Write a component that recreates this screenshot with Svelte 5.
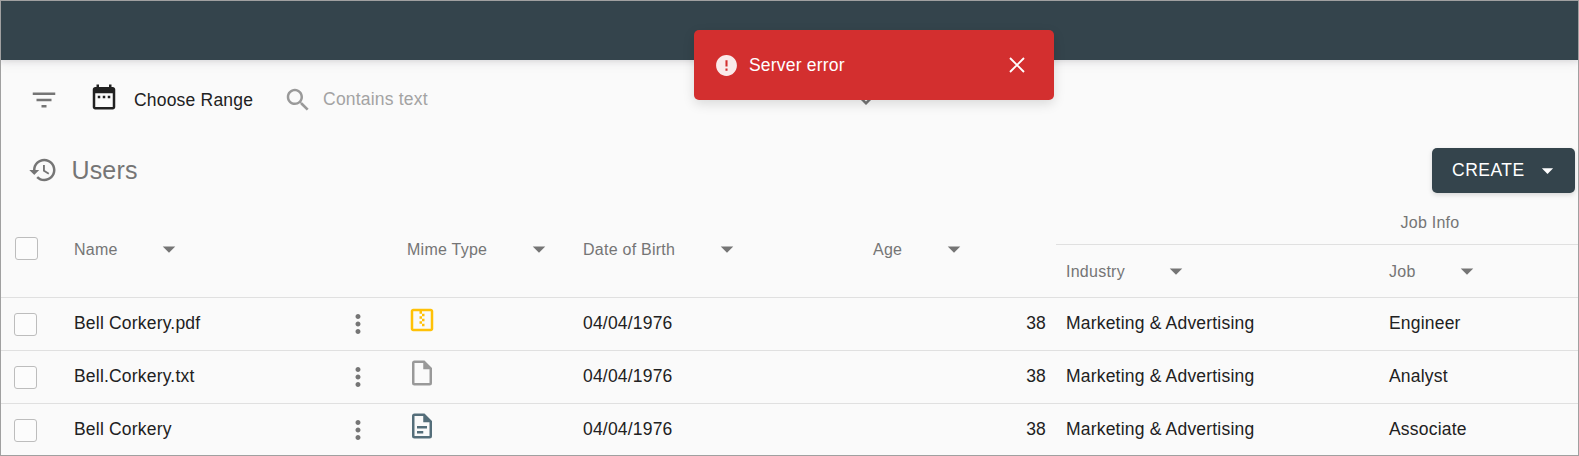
<script>
  const rows = [
    { name: 'Bell Corkery.pdf', type: 'zip', dob: '04/04/1976', age: 38, industry: 'Marketing & Advertising', job: 'Engineer' },
    { name: 'Bell.Corkery.txt', type: 'file', dob: '04/04/1976', age: 38, industry: 'Marketing & Advertising', job: 'Analyst' },
    { name: 'Bell Corkery', type: 'doc', dob: '04/04/1976', age: 38, industry: 'Marketing & Advertising', job: 'Associate' },
  ];
  const icons = {
    filter: 'M10 18h4v-2h-4v2zM3 6v2h18V6H3zm3 7h12v-2H6v2z',
    calendar: 'M9 11H7v2h2v-2zm4 0h-2v2h2v-2zm4 0h-2v2h2v-2zm2-7h-1V2h-2v2H8V2H6v2H5c-1.11 0-1.99.9-1.99 2L3 20c0 1.1.89 2 2 2h14c1.1 0 2-.9 2-2V6c0-1.1-.9-2-2-2zm0 16H5V9h14v11z',
    search: 'M15.5 14h-.79l-.28-.27C15.41 12.59 16 11.11 16 9.5 16 5.91 13.09 3 9.5 3S3 5.91 3 9.5 5.91 16 9.5 16c1.61 0 3.09-.59 4.23-1.57l.27.28v.79l5 4.99L20.49 19l-4.99-5zm-6 0C7.01 14 5 11.99 5 9.5S7.01 5 9.5 5 14 7.01 14 9.5 11.99 14 9.5 14z',
    history: 'M13 3c-4.97 0-9 4.03-9 9H1l3.89 3.89.07.14L9 12H6c0-3.87 3.13-7 7-7s7 3.13 7 7-3.13 7-7 7c-1.93 0-3.68-.79-4.94-2.06l-1.42 1.42C8.27 19.99 10.51 21 13 21c4.97 0 9-4.03 9-9s-4.03-9-9-9zm-1 5v5l4.28 2.54.72-1.21-3.5-2.08V8H12z',
    arrow: 'M7 10l5 5 5-5z',
    chevron: 'M7.41 8.590 12 13.170l4.590-4.580L18 10l-6 6-6-6z',
    more: 'M12 8c1.1 0 2-.9 2-2s-.9-2-2-2-2 .9-2 2 .9 2 2 2zm0 2c-1.1 0-2 .9-2 2s.9 2 2 2 2-.9 2-2-.9-2-2-2zm0 6c-1.1 0-2 .9-2 2s.9 2 2 2 2-.9 2-2-.9-2-2-2z',
    error: 'M12 2C6.48 2 2 6.48 2 12s4.48 10 10 10 10-4.48 10-10S17.52 2 12 2zm1 15h-2v-2h2v2zm0-4h-2V7h2v6z',
    zip: 'M12 17V15H14V17H12M14 13V11H12V13H14M14 9V7H12V9H14M10 11H12V9H10V11M10 15H12V13H10V15M21 5V19C21 20.1 20.1 21 19 21H5C3.9 21 3 20.1 3 19V5C3 3.9 3.9 3 5 3H19C20.1 3 21 3.9 21 5M19 5H12V7H10V5H5V19H19V5Z',
    file: 'M14 2H6a2 2 0 0 0-2 2v16a2 2 0 0 0 2 2h12a2 2 0 0 0 2-2V8l-6-6zm4 18H6V4h7v5h5v11z',
    doc: 'M14 2H6a2 2 0 0 0-2 2v16a2 2 0 0 0 2 2h12a2 2 0 0 0 2-2V8l-6-6zm4 18H6V4h7v5h5v11zM8 12h8v2H8zM8 16h5v2H8z',
  };
</script>

{#snippet icon(name)}
  <svg class="icon {name}" viewBox="0 0 24 24" aria-hidden="true"><path d={icons[name]} /></svg>
{/snippet}

{#snippet heading(label)}
  <span>{label}</span>{@render icon('arrow')}
{/snippet}

<div class="page">
  <header class="appbar"></header>

  <div class="filters">
    {@render icon('filter')}
    {@render icon('calendar')}
    <span class="range">Choose Range</span>
    {@render icon('search')}
    <span class="placeholder">Contains text</span>
    <span class="select">{@render icon('chevron')}</span>
  </div>

  <div class="titlebar">
    {@render icon('history')}
    <h1>Users</h1>
    <button class="create">CREATE {@render icon('arrow')}</button>
  </div>

  <div class="grid thead">
    <div class="cell check"><i class="box"></i></div>
    <div class="cell">{@render heading('Name')}</div>
    <div></div>
    <div class="cell">{@render heading('Mime Type')}</div>
    <div class="cell">{@render heading('Date of Birth')}</div>
    <div class="cell agehead">{@render heading('Age')}</div>
    <div class="group">
      <div class="grouptitle">Job Info</div>
      <div class="subheads">
        <div class="cell">{@render heading('Industry')}</div>
        <div class="cell">{@render heading('Job')}</div>
      </div>
    </div>
  </div>

  {#each rows as row}
    <div class="grid row">
      <div class="check"><i class="box"></i></div>
      <div>{row.name}</div>
      <div class="menu">{@render icon('more')}</div>
      <div class="mime">{@render icon(row.type)}</div>
      <div>{row.dob}</div>
      <div class="age">{row.age}</div>
      <div class="industry">{row.industry}</div>
      <div>{row.job}</div>
    </div>
  {/each}

  <div class="toast" role="alert">
    {@render icon('error')}
    <span>Server error</span>
    <svg class="close" viewBox="0 0 16 16" aria-hidden="true"><path d="M1 1 15 15M15 1 1 15" /></svg>
  </div>
</div>

<style>
  .page {
    position: relative;
    box-sizing: border-box;
    width: 1579px;
    height: 456px;
    overflow: hidden;
    background: #fafafa;
    color: #212121;
    font: 17.5px/24px "Liberation Sans", Arial, sans-serif;
    letter-spacing: 0.195px;
  }
  .page::after {
    content: '';
    position: absolute;
    inset: 0;
    border: 1px solid #a0a0a0;
    pointer-events: none;
  }
  .icon { display: block; flex: none; width: 30px; height: 30px; fill: #757575; }
  .appbar {
    height: 60px;
    background: #34444c;
    box-shadow: 0 2px 5px rgba(40, 30, 50, 0.1), 0 4px 12px rgba(40, 30, 50, 0.05);
  }
  .filters { display: flex; align-items: center; height: 80px; padding-left: 29px; }
  .filters .calendar { margin: -7px 0 0 29.500px; fill: #212121; }
  .range { margin-left: 15.500px; }
  .filters .search { margin-left: 30px; fill: #999; }
  .placeholder { margin: -2px 0 0 10px; color: #a3a3a3; }
  .select { margin-left: 423.500px; }
  .titlebar { display: flex; align-items: center; height: 60px; padding: 0 4px 0 28px; }
  .titlebar .history { margin-left: -0.500px; }
  h1 { margin: 0 auto 0 14px; font-size: 25px; font-weight: 400; color: #757575; letter-spacing: 0.150px; line-height: 30px; }
  .create {
    display: flex;
    align-items: center;
    box-sizing: border-box;
    width: 143px;
    height: 45px;
    padding: 0 14px 0 20px;
    border: 0;
    border-radius: 5px;
    background: #34444c;
    color: #fff;
    font: inherit;
    letter-spacing: 0.5px;
    justify-content: space-between;
    box-shadow: 0 2px 5px rgba(0, 0, 0, 0.14);
  }
  .create .icon { width: 27px; height: 27px; fill: #fff; }
  .grid {
    display: grid;
    grid-template-columns: 74px 269px 64px 176px 194px 279px 333px 1fr;
    box-sizing: border-box;
    border-bottom: 1px solid #e0e0e0;
  }
  .thead { height: 98px; align-items: center; color: #757575; font-size: 16px; letter-spacing: 0.250px; }
  .cell { display: flex; align-items: center; gap: 36.500px; padding-top: 2px; }
  .cell .icon { margin-top: -2px; }
  .thead .check { padding: 0 0 0 15px; }
  .group { grid-column: 7 / 9; align-self: stretch; }
  .agehead { padding-left: 96px; }
  .grouptitle { box-sizing: border-box; height: 45px; padding: 11px 0 0 344.500px; border-bottom: 1px solid #e0e0e0; }
  .subheads { display: grid; grid-template-columns: 323px 1fr; height: 52px; padding-left: 10px; }
  .row { height: 53px; align-items: center; padding-bottom: 2px; }
  .box {
    display: block;
    box-sizing: border-box;
    width: 23px;
    height: 23px;
    border: 1px solid #bdbdbd;
    border-radius: 3px;
    background: #fcfcfc;
  }
  .row .check { padding: 3px 0 0 14px; }
  .menu .icon { margin-top: 2px; }
  .mime .icon { margin-top: -7px; }
  .zip { fill: #ffc107; }
  .file { fill: #999; }
  .doc { fill: #546e7a; }
  .age { text-align: right; padding-right: 10px; }
  .industry { padding-left: 10px; }
  .toast {
    position: absolute;
    left: 694px;
    top: 30px;
    display: flex;
    align-items: center;
    box-sizing: border-box;
    width: 360px;
    height: 70px;
    padding: 0 29.500px 0 20px;
    border-radius: 5px;
    background: #d32f2f;
    color: #fff;
    box-shadow: 0 4px 12px rgba(0, 0, 0, 0.13);
  }
  .toast .error { width: 25px; height: 25px; fill: #fff; opacity: 0.9; }
  .toast span { flex: 1; margin-left: 10px; }
  .close { width: 16px; height: 16px; stroke: #fff; stroke-width: 1.900; }
</style>
